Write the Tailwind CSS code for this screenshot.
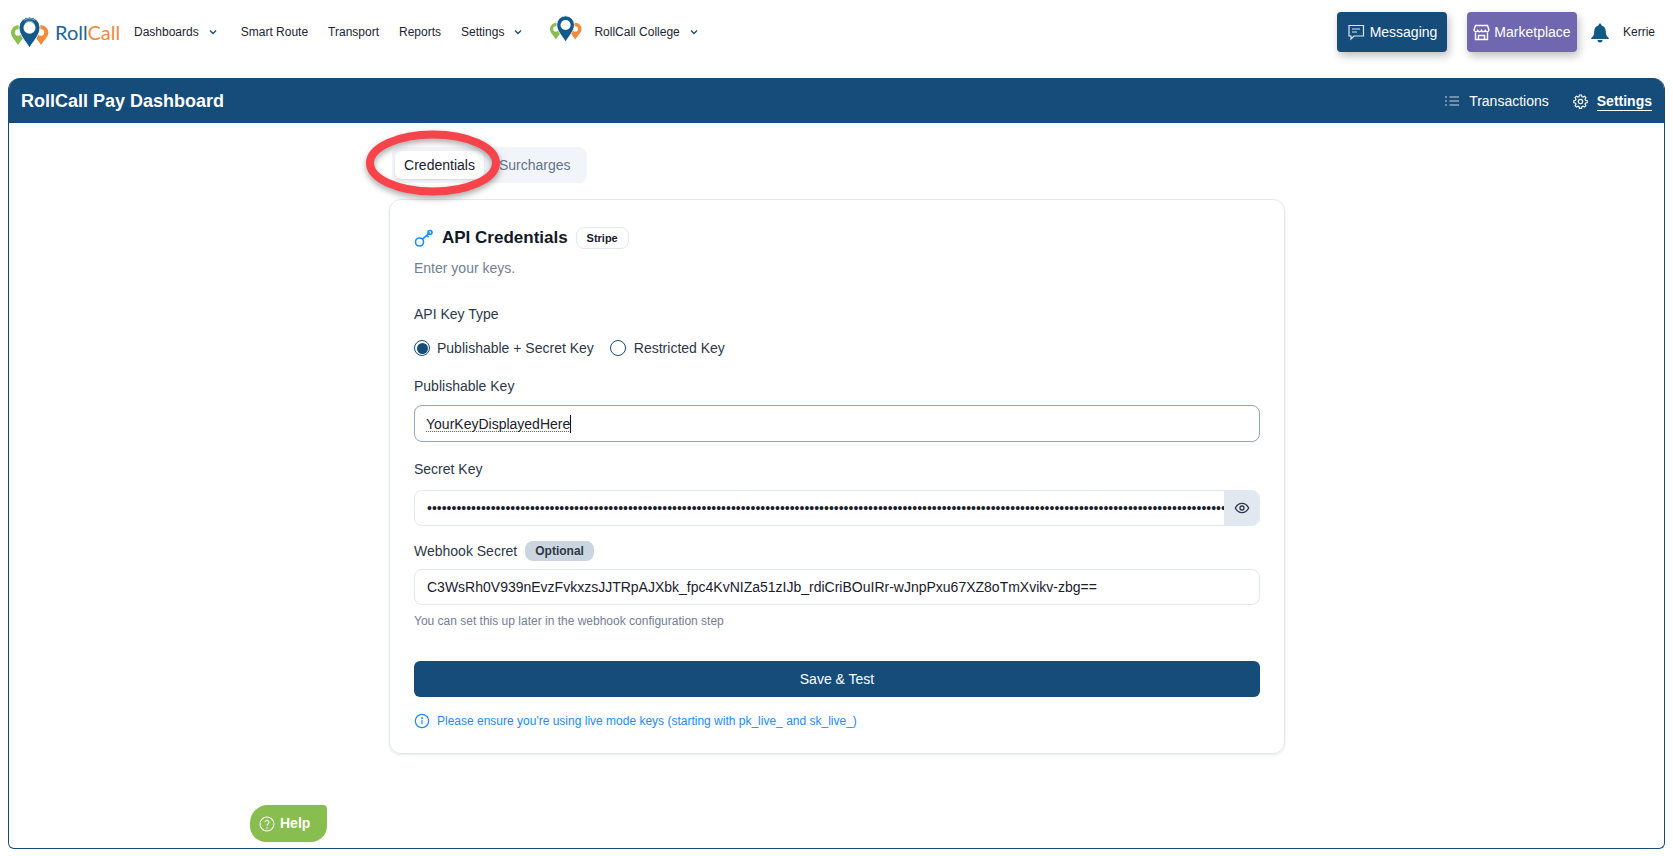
<!DOCTYPE html>
<html lang="en">
<head>
<meta charset="utf-8">
<title>RollCall Pay Dashboard</title>
<script src="https://cdn.jsdelivr.net/npm/@tailwindcss/browser@4"></script>
</head>
<body class="bg-white font-['Liberation_Sans',Arial,sans-serif] text-[#1a202c]">
<div class="relative w-[1673px] h-[856px] overflow-hidden">
  <header class="h-[78px] flex items-start pl-[10px] pr-[18px]">
    <div class="flex items-center h-[64px] w-full">
      <svg class="w-[40px] h-[32px] shrink-0 mt-[-1px]" viewBox="0 0 40 32">
        <path d="M8 29C5 24 1 21 1 16.500a7.200 7.200 0 0 1 14.400 0C15.400 21 11 24 8 29z" fill="#8abf50"/>
        <circle cx="8" cy="16.500" r="3.200" fill="#fff"/>
        <path d="M31 29C28 24 24 21 24 16.500a7.200 7.200 0 0 1 14.400 0C38.400 21 34 24 31 29z" fill="#f58a3c"/>
        <circle cx="31" cy="16.500" r="3.200" fill="#fff"/>
        <path d="M19.500 32C15.500 25 9 19 9 11.500a10.500 10.500 0 0 1 21 0C30 19 23.500 25 19.500 32z" fill="#14598c" stroke="#fff" stroke-width="1"/>
        <circle cx="19.500" cy="11.800" r="6" fill="#fff"/>
        <path d="M14 4.500c3-2.500 8-2.500 11 0M15.500 6.500c2.500-1.800 5.500-1.800 8 0" stroke="#b9d3e4" stroke-width=".8" fill="none"/>
      </svg>
      <span class="ml-[5px] text-[20px] font-['Lato',sans-serif] font-normal w-[64px] shrink-0"><span class="text-[#1c6593]">Roll</span><span class="text-[#f58a3c]">Call</span></span>
      <nav class="flex items-center text-[12px] text-[#1a2433] ml-[15px]">
        <span>Dashboards</span>
        <svg class="w-[10px] h-[10px] ml-[9px] mr-[23px]" viewBox="0 0 10 10" fill="none" stroke="#1c4f78" stroke-width="1.400"><path d="M2 3.500 5 6.500 8 3.500"/></svg>
        <span>Smart Route</span>
        <span class="ml-[20px]">Transport</span>
        <span class="ml-[20px]">Reports</span>
        <span class="ml-[20px]">Settings</span>
        <svg class="w-[10px] h-[10px] ml-[9px]" viewBox="0 0 10 10" fill="none" stroke="#1c4f78" stroke-width="1.400"><path d="M2 3.500 5 6.500 8 3.500"/></svg>
      </nav>
      <svg class="w-[34px] h-[27px] ml-[26px] shrink-0 mt-[-7px]" viewBox="0 0 40 32">
        <path d="M8 29C5 24 1 21 1 16.500a7.200 7.200 0 0 1 14.400 0C15.400 21 11 24 8 29z" fill="#8abf50"/>
        <circle cx="8" cy="16.500" r="3.200" fill="#fff"/>
        <path d="M31 29C28 24 24 21 24 16.500a7.200 7.200 0 0 1 14.400 0C38.400 21 34 24 31 29z" fill="#f58a3c"/>
        <circle cx="31" cy="16.500" r="3.200" fill="#fff"/>
        <path d="M19.500 32C15.500 25 9 19 9 11.500a10.500 10.500 0 0 1 21 0C30 19 23.500 25 19.500 32z" fill="#14598c" stroke="#fff" stroke-width="1"/>
        <circle cx="19.500" cy="11.800" r="6" fill="#fff"/>
      </svg>
      <span class="text-[12px] text-[#1a2433] ml-[11px]">RollCall College</span>
      <svg class="w-[10px] h-[10px] ml-[9px]" viewBox="0 0 10 10" fill="none" stroke="#1c4f78" stroke-width="1.400"><path d="M2 3.500 5 6.500 8 3.500"/></svg>
      <div class="ml-auto flex items-center">
        <div class="w-[110px] h-[40px] rounded-[4px] bg-[#154c79] text-white text-[14px] flex items-center justify-center gap-[5px] shadow-[2px_4px_8px_rgba(0,0,0,0.25)]">
          <svg class="w-[18px] h-[18px]" viewBox="0 0 18 18" fill="none" stroke="#dbe6ef" stroke-width="1.200"><path d="M2 2.500h14.500v10.500h-9.500l-3 3v-3h-2z"/><path d="M5 6h8M5 9h5"/></svg>
          <span>Messaging</span>
        </div>
        <div class="w-[110px] h-[40px] ml-[20px] rounded-[4px] bg-[#6f67b0] text-white text-[14px] flex items-center justify-center gap-[4px] shadow-[2px_4px_8px_rgba(0,0,0,0.25)]">
          <svg class="w-[17px] h-[17px]" viewBox="0 0 17 17" fill="none" stroke="#fff" stroke-width="1.400"><path d="M2.500 1.500h12l1.500 4.500a2 2 0 0 1-3.800.5 2 2 0 0 1-3.700 0 2 2 0 0 1-3.700 0 2 2 0 0 1-3.800-.5z"/><path d="M2.500 8.500v7h12v-7M5.500 15.500v-4h6v4"/></svg>
          <span>Marketplace</span>
        </div>
        <svg class="w-[20px] h-[21px] ml-[13px]" viewBox="0 0 20 21" fill="#125a86"><path d="M10 1.500c-.8 0-1.300.6-1.300 1.300v.4C5.800 4 4.200 6.500 4.200 9.500c0 3.500-1 5-3 6.500v1h17.600v-1c-2-1.500-3-3-3-6.500 0-3-1.600-5.500-4.500-6.300v-.4c0-.7-.5-1.300-1.300-1.300z"/><path d="M7.500 18h5a2.500 2.500 0 0 1-5 0z"/></svg>
        <span class="text-[12px] ml-[13px] text-[#1a2433]">Kerrie</span>
      </div>
    </div>
  </header>

  <main class="ml-[8px] w-[1657px] h-[771px] rounded-t-[12px] rounded-b-[6px] border-x border-b-[1.500px] border-[#154c79] overflow-hidden">
    <div class="h-[45px] bg-[#154c79] flex items-center justify-between pl-[12px] pr-[12px] text-white">
      <h1 class="text-[18px] font-bold mt-[1px]">RollCall Pay Dashboard</h1>
      <div class="flex items-center text-[14px] mt-[1px]">
        <svg class="w-[14px] h-[14px] mr-[10px]" viewBox="0 0 14 14" fill="none" stroke="#c9d6e2" stroke-width="1.200"><path d="M4.500 3H14M4.500 7H14M4.500 11H14M0 3h2M0 7h2M0 11h2"/></svg>
        <span>Transactions</span>
        <svg class="w-[15px] h-[15px] ml-[24px] mr-[9px]" viewBox="0 0 24 24" fill="none" stroke="#fff" stroke-width="1.800"><path d="M10.300 2.500h3.400l.5 2.700 1.800.8 2.300-1.500 2.400 2.400-1.500 2.300.8 1.800 2.700.5v3.400l-2.700.5-.8 1.800 1.500 2.300-2.400 2.400-2.300-1.500-1.800.8-.5 2.700h-3.400l-.5-2.700-1.800-.8-2.300 1.500-2.400-2.400 1.500-2.300-.8-1.800-2.700-.5v-3.400l2.700-.5.8-1.800-1.500-2.300 2.400-2.400 2.300 1.500 1.800-.8z" transform="translate(0 -1)"/><circle cx="12" cy="12" r="3.500"/></svg>
        <span class="font-bold border-b-[1.500px] border-white leading-[17px] mt-[1px]">Settings</span>
      </div>
    </div>
    <div class="w-[896px] ml-[380px] mt-[24px]">
      <div class="ml-[3px] w-[195px] h-[36px] rounded-[8px] bg-[#f1f5f9] flex items-center pl-[3px] text-[14px]">
        <span class="w-[89px] h-[28px] rounded-[6px] bg-white shadow-sm flex items-center justify-center text-[#1a202c]">Credentials</span>
        <span class="ml-[15px] text-[#64748b]">Surcharges</span>
      </div>
      <section class="mt-[16px] h-[555px] rounded-[12px] border-[1.500px] border-[#e2e8f0] shadow-[0_1px_3px_rgba(0,0,0,0.1)] pl-[24px] pr-[24px] pt-[25px]">
        <div class="flex items-center h-[26px]">
          <svg class="w-[20px] h-[20px]" viewBox="0 0 20 20" fill="none" stroke="#1a8cff" stroke-width="1.600"><circle cx="5.500" cy="14" r="4"/><path d="M8.500 11.200 16 4.500M13 7.200l1.500 2"/><circle cx="16" cy="4.500" r="2"/></svg>
          <h2 class="ml-[8px] text-[17px] font-bold text-[#111827]">API Credentials</h2>
          <span class="ml-[8px] h-[22px] w-[53px] justify-center rounded-[8px] border border-[#e2e8f0] text-[11px] font-bold flex items-center">Stripe</span>
        </div>
        <p class="mt-[8px] text-[14px] leading-[18px] text-[#718096]">Enter your keys.</p>
        <p class="mt-[28px] text-[14px] leading-[18px] text-[#2d3748]">API Key Type</p>
        <div class="mt-[16px] h-[18px] flex items-center text-[14px] text-[#2d3748]">
          <span class="w-[16px] h-[16px] rounded-full border-[1.500px] border-[#154c79] p-[1.500px] flex"><span class="w-full h-full rounded-full bg-[#154c79]"></span></span>
          <span class="ml-[7px]">Publishable + Secret Key</span>
          <span class="ml-[16px] w-[16px] h-[16px] rounded-full border-[1.500px] border-[#154c79]"></span>
          <span class="ml-[8px]">Restricted Key</span>
        </div>
        <label class="block mt-[20px] text-[14px] leading-[18px] text-[#2d3748]">Publishable Key</label>
        <div class="mt-[10px] h-[37px] rounded-[8px] border-[1.500px] border-[#8fa6bf] px-[11px] flex items-center text-[14px]">
          <span class="underline decoration-dotted decoration-[#e53e3e] decoration-1 underline-offset-2 border-r border-[#111] leading-[18px]">YourKeyDisplayedHere</span>
        </div>
        <label class="block mt-[18px] text-[14px] leading-[18px] text-[#2d3748]">Secret Key</label>
        <div class="mt-[12px] h-[36px] rounded-[8px] border border-[#e2e8f0] flex items-center overflow-hidden">
          <input type="password" readonly value="sk_live_51abcdefghijklmnopqrstuvwxyz0123456789abcdefghijklmnopqrstuvwxyz0123456789abcdefghijklmnopqrstuvwxyz0123456789abcdefghijklmnopqrstuvwxyz0123456789abcdefghijklmnopqrstuvwxyz0123456789abcdefghijklmnopqrstuvwxyz0123456789abcdefghijklmnopqrstuvwxyz0123456789" class="flex-1 min-w-0 pl-[12px] h-full text-[14px] text-[#1a202c] outline-none">
          <span class="w-[35px] h-full bg-[#e2e8f0] flex items-center justify-center">
            <svg class="w-[16px] h-[16px]" viewBox="0 0 24 24" fill="none" stroke="#2d3748" stroke-width="2"><path d="M2 12s3.500-7 10-7 10 7 10 7-3.500 7-10 7-10-7-10-7z"/><circle cx="12" cy="12" r="3"/></svg>
          </span>
        </div>
        <div class="mt-[15px] h-[20px] flex items-center text-[14px] text-[#2d3748]">
          <span>Webhook Secret</span>
          <span class="ml-[8px] h-[20px] px-[10px] rounded-[8px] bg-[#cbd5e0] text-[12px] font-bold flex items-center text-[#2d3748]">Optional</span>
        </div>
        <input readonly value="C3WsRh0V939nEvzFvkxzsJJTRpAJXbk_fpc4KvNIZa51zIJb_rdiCriBOuIRr-wJnpPxu67XZ8oTmXvikv-zbg==" class="mt-[8px] block w-full h-[36px] rounded-[8px] border border-[#e2e8f0] px-[12px] text-[14px] text-[#1a202c] outline-none">
        <p class="mt-[8px] text-[12px] leading-[16px] text-[#718096]">You can set this up later in the webhook configuration step</p>
        <button class="mt-[32px] block w-full h-[36px] rounded-[6px] bg-[#154c79] text-white text-[14px]">Save &amp; Test</button>
        <div class="mt-[15px] flex items-center text-[12px] text-[#1a8cff]">
          <svg class="w-[16px] h-[16px]" viewBox="0 0 24 24" fill="none" stroke="currentColor" stroke-width="1.800"><circle cx="12" cy="12" r="10"/><path d="M12 11v6"/><circle cx="12" cy="7.500" r=".6"/></svg>
          <span class="ml-[7px]">Please ensure you're using live mode keys (starting with pk_live_ and sk_live_)</span>
        </div>
      </section>
    </div>
  </main>

  <svg class="absolute left-[362px] top-[126px] w-[144px] h-[76px] drop-shadow-[0_3px_3px_rgba(0,0,0,0.35)]" viewBox="0 0 144 76" fill="none">
    <ellipse cx="71" cy="37" rx="63" ry="28.500" stroke="#f7444a" stroke-width="8"/>
  </svg>
  <div class="absolute left-[250px] top-[805px] w-[77px] h-[37px] bg-[#88bd4f] rounded-t-[18px] rounded-tr-[4px] rounded-b-[16px] text-white text-[14px] font-bold flex items-center pl-[9px] gap-[5px]">
    <svg class="w-[16px] h-[16px]" viewBox="0 0 24 24" fill="none" stroke="#fff" stroke-width="1.600"><circle cx="12" cy="12" r="10.500"/><path d="M9 9.500a3 3 0 1 1 4.500 2.600c-1 .6-1.500 1.200-1.500 2.400"/><circle cx="12" cy="18" r=".5"/></svg>
    <span>Help</span>
  </div>
</div>
</body>
</html>
